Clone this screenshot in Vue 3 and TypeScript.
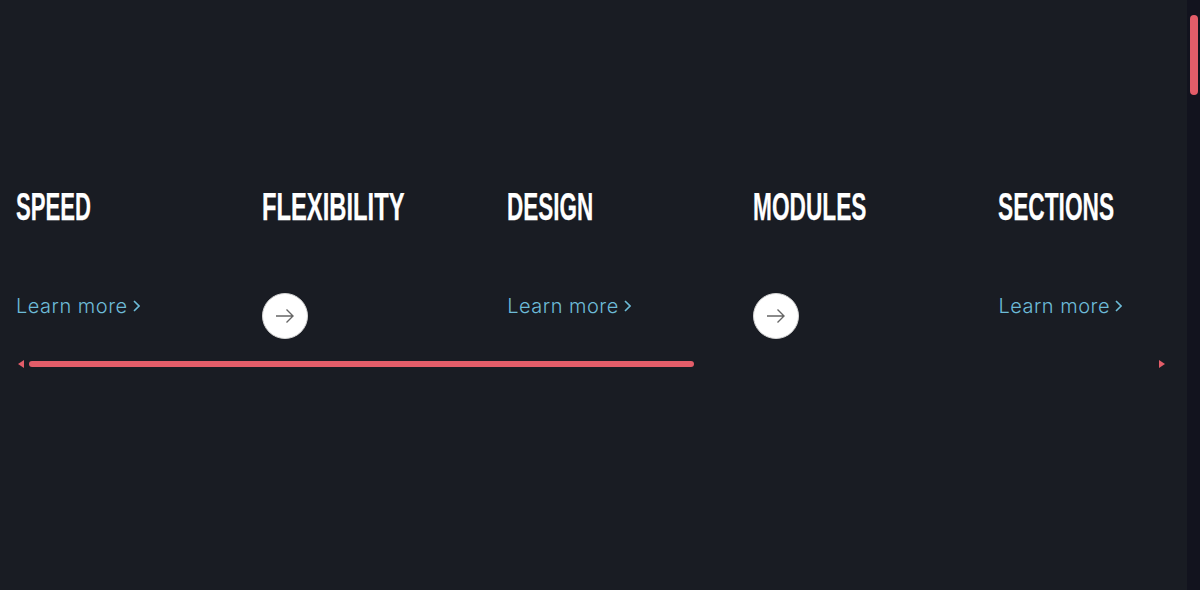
<script setup lang="ts">
interface Item { title: string; kind: 'link' | 'arrow'; squeeze: number }
const items: Item[] = [
  { title: 'SPEED', kind: 'link', squeeze: 0.582 },
  { title: 'FLEXIBILITY', kind: 'arrow', squeeze: 0.625 },
  { title: 'DESIGN', kind: 'link', squeeze: 0.592 },
  { title: 'MODULES', kind: 'arrow', squeeze: 0.597 },
  { title: 'SECTIONS', kind: 'link', squeeze: 0.598 },
]
</script>

<template>
  <div class="page">
    <main class="main">
      <div class="row">
        <section v-for="item in items" :key="item.title" class="col">
          <h2 class="title"><span class="title-text" :style="{ transform: `scaleX(${item.squeeze})` }">{{ item.title }}</span></h2>
          <a v-if="item.kind === 'link'" class="link" href="#">Learn more <svg class="chev" viewBox="0 0 7 12" width="7" height="12"><path d="M1 1l5 5-5 5" fill="none" stroke="currentColor" stroke-width="1.6"/></svg></a>
          <button v-else class="circle" type="button" aria-label="Next">
            <svg viewBox="0 0 20 16" width="20" height="16"><path d="M1 8h17M11.5 1.5 18 8l-6.5 6.5" fill="none" stroke="#666" stroke-width="1.4"/></svg>
          </button>
        </section>
      </div>
      <div class="hbar">
        <span class="tri tri-left"></span>
        <div class="htrack"><div class="hthumb"></div></div>
        <span class="tri tri-right"></span>
      </div>
    </main>
    <aside class="vbar"><div class="vthumb"></div></aside>
  </div>
</template>

<style>
html, body { margin: 0; background: #191c23; overflow: hidden; }
</style>

<style scoped>
.page {
  display: flex;
  width: 1200px;
  height: 590px;
  background: #191c23;
  overflow: hidden;
}
.main {
  flex: 0 0 1187px;
  width: 1187px;
  padding-top: 182px;
  box-sizing: border-box;
  overflow: hidden;
}
.row {
  display: flex;
  padding-left: 16px;
  height: 172px;
}
.col {
  flex: 0 0 245.6px;
  width: 245.6px;
}
.title {
  margin: 0;
  height: 50px;
  line-height: 50px;
  font-family: "Liberation Sans Narrow", "Liberation Sans", sans-serif;
  font-size: 38px;
  font-weight: 700;
  color: #fff;
  white-space: nowrap;
  -webkit-text-stroke: 0.25px #fff;
}
.title-text {
  display: inline-block;
  transform-origin: left center;
}
.link {
  display: inline-flex;
  align-items: center;
  gap: 5px;
  margin-top: 60px;
  height: 28px;
  font-family: Inter, "Open Sans", sans-serif;
  font-size: 20px;
  font-weight: 300;
  letter-spacing: 0.5px;
  color: #6dbbd8;
  text-decoration: none;
}
.circle {
  display: flex;
  align-items: center;
  justify-content: center;
  margin-top: 61px;
  width: 46px;
  height: 46px;
  padding: 0;
  border: 1px solid #d5d5d5;
  border-radius: 50%;
  background: #fff;
}
.hbar {
  display: flex;
  align-items: center;
  gap: 5px;
  height: 10px;
  margin-top: 5px;
  padding: 0 22px 0 18px;
}
.htrack { flex: 1; }
.hthumb {
  width: 665px;
  height: 6px;
  border-radius: 3px;
  background: #e35d69;
}
.tri { width: 0; height: 0; border-top: 4px solid transparent; border-bottom: 4px solid transparent; }
.tri-left { border-right: 6px solid #e35d69; }
.tri-right { border-left: 6px solid #e35d69; }
.vbar {
  flex: 0 0 13px;
  background: #12131e;
  padding: 15px 2px 0 3px;
  box-sizing: border-box;
}
.vthumb {
  height: 80px;
  border-radius: 4px;
  background: #e35d69;
}
</style>
